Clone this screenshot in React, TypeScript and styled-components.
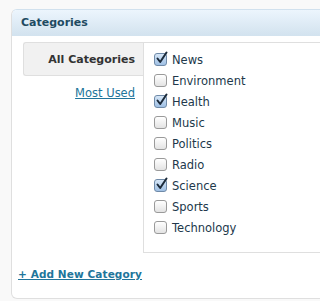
import React from "react";
import styled, { createGlobalStyle } from "styled-components";

const Global = createGlobalStyle`
  html, body { margin: 0; padding: 0; background: #f9f9f9; }
  body { font-family: "DejaVu Sans", Verdana, sans-serif; overflow: hidden; }
`;

const Page = styled.div`
  width: 100%;
  height: 301px;
  padding: 9px 0 0 11px;
  box-sizing: border-box;
  overflow: hidden;
`;

const Panel = styled.div`
  width: 1200px;
  border: 1px solid #dfdfdf;
  border-top-color: #d1e1ee;
  border-radius: 6px 0 0 6px;
  background: #fff;
  overflow: hidden;
`;

const Header = styled.div`
  height: 25px;
  display: flex;
  align-items: center;
  padding-left: 9px;
  background: linear-gradient(to bottom, #ecf5fd, #d3e3ef);
  border-bottom: 1px solid #d3e3ef;
  font-weight: bold;
  font-size: 11px;
  color: #1e4a61;
`;

const Body = styled.div`
  padding: 6px 0 0 11px;
`;

const Columns = styled.div`
  display: flex;
  align-items: flex-start;
`;

const Tabs = styled.ul`
  list-style: none;
  margin: 0;
  padding: 0;
  width: 120px;
  flex: none;
  display: flex;
  flex-direction: column;
  align-items: stretch;
  gap: 10px;
`;

const Tab = styled.li<{ $active?: boolean }>`
  text-align: right;
  padding-right: 8px;
  ${(p) =>
    p.$active
      ? `
    height: 32px;
    display: flex;
    align-items: center;
    justify-content: flex-end;
    background: #f1f1f1;
    border: 1px solid #dfdfdf;
    border-right: none;
    border-radius: 3px 0 0 3px;
    font-weight: bold;
    font-size: 11px;
    color: #333;
  `
      : `
    font-size: 11.5px;
  `}
`;

const TabLink = styled.a`
  color: #21759b;
  text-decoration: underline;
`;

const List = styled.ul`
  list-style: none;
  margin: 0;
  padding: 6px 0 16px 10px;
  width: 400px;
  border: 1px solid #dfdfdf;
  height: 211px;
  box-sizing: border-box;
`;

const Item = styled.li`
  height: 21px;
  display: flex;
  align-items: center;
  gap: 5px;
  font-size: 11.5px;
  color: #21384b;
`;

const Box = styled.span<{ $checked?: boolean }>`
  width: 11px;
  height: 11px;
  flex: none;
  border: 1px solid ${(p) => (p.$checked ? "#6f8aa8" : "#9a9a9a")};
  border-radius: 3px;
  background: ${(p) =>
    p.$checked
      ? "linear-gradient(to bottom, #d6e6f7, #9fc0e4)"
      : "linear-gradient(to bottom, #ffffff, #e3e3e3)"};
  position: relative;
  display: block;
`;

const Check = styled.svg`
  position: absolute;
  left: 0px;
  top: -3px;
  width: 13px;
  height: 13px;
`;

const Footer = styled.div`
  padding: 10px 0 16px 6px;
`;

const AddLink = styled.a`
  font-size: 10.5px;
  font-weight: bold;
  color: #21759b;
  text-decoration: underline;
  letter-spacing: 0.1px;
`;

const cats: [string, boolean][] = [
  ["News", true],
  ["Environment", false],
  ["Health", true],
  ["Music", false],
  ["Politics", false],
  ["Radio", false],
  ["Science", true],
  ["Sports", false],
  ["Technology", false],
];

export default function App() {
  return (
    <>
      <Global />
      <Page>
        <Panel>
          <Header>Categories</Header>
          <Body>
            <Columns>
              <Tabs>
                <Tab $active>All Categories</Tab>
                <Tab>
                  <TabLink href="#">Most Used</TabLink>
                </Tab>
              </Tabs>
              <List>
                {cats.map(([name, checked]) => (
                  <Item key={name}>
                    <Box $checked={checked}>
                      {checked && (
                        <Check viewBox="0 0 13 13">
                          <path
                            d="M2.5 7.5 L5.2 11 L11.5 1.5"
                            fill="none"
                            stroke="#1b2a3a"
                            strokeWidth="2"
                            strokeLinecap="round"
                            strokeLinejoin="round"
                          />
                        </Check>
                      )}
                    </Box>
                    {name}
                  </Item>
                ))}
              </List>
            </Columns>
          </Body>
          <Footer>
            <AddLink href="#">+ Add New Category</AddLink>
          </Footer>
        </Panel>
      </Page>
    </>
  );
}
